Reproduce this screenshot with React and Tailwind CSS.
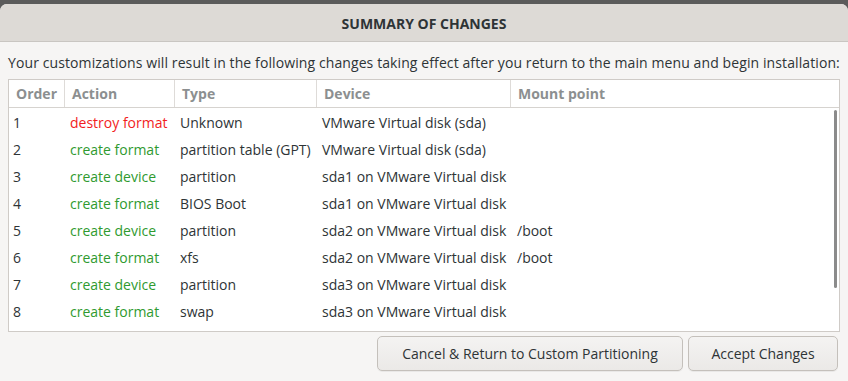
import React from "react";

const rows = [
  ["1", "destroy format", "Unknown", "VMware Virtual disk (sda)", ""],
  ["2", "create format", "partition table (GPT)", "VMware Virtual disk (sda)", ""],
  ["3", "create device", "partition", "sda1 on VMware Virtual disk", ""],
  ["4", "create format", "BIOS Boot", "sda1 on VMware Virtual disk", ""],
  ["5", "create device", "partition", "sda2 on VMware Virtual disk", "/boot"],
  ["6", "create format", "xfs", "sda2 on VMware Virtual disk", "/boot"],
  ["7", "create device", "partition", "sda3 on VMware Virtual disk", ""],
  ["8", "create format", "swap", "sda3 on VMware Virtual disk", ""],
];

// column widths measured off the header separators
const cols = ["w-[56px]", "w-[110px]", "w-[142px]", "w-[194px]", "flex-1"];
const headers = ["Order", "Action", "Type", "Device", "Mount point"];

export default function App() {
  return (
    <div className="w-[848px] h-[381px] bg-[#5b5b5b] pt-[4px] font-['Open_Sans',sans-serif] text-[#2e3436] text-[14px]">
      <div className="h-full flex flex-col rounded-t-[7px] bg-[#f6f5f4] overflow-hidden">
        {/* title bar */}
        <div className="h-[38px] shrink-0 flex items-center justify-center bg-[#dddad6] border-b border-[#c9c6c2]">
          <span className="font-bold text-[14px] pt-[1px] text-[#2e3436]">SUMMARY OF CHANGES</span>
        </div>

        <div className="flex-1 flex flex-col px-[8px]">
          <p className="mt-[11px] h-[20px] leading-[20px] whitespace-nowrap tracking-[0.1px]">
            Your customizations will result in the following changes taking effect after you return to the main menu and begin installation:
          </p>

          {/* changes list */}
          <div className="mt-[6px] w-[832px] h-[253px] bg-white border border-[#cfcbc7] flex flex-col relative">
            <div className="h-[28px] flex border-b border-[#d6d3cf] text-[#8c8f90] font-bold">
              {headers.map((h, i) => (
                <div
                  key={h}
                  className={`${cols[i]} flex items-center pl-[7px] ${i < 4 ? "border-r border-[#dedbd8]" : ""}`}
                >
                  {h}
                </div>
              ))}
            </div>
            {rows.map((r) => (
              <div key={r[0]} className="h-[27px] flex items-center pt-[1px]">
                <div className="w-[56px] pl-[4px]">{r[0]}</div>
                <div className={`w-[110px] pl-[5px] ${r[1].startsWith("destroy") ? "text-[#f21d1d]" : "text-[#2f9a2f]"}`}>
                  {r[1]}
                </div>
                <div className="w-[142px] pl-[5px] whitespace-nowrap">{r[2]}</div>
                <div className="w-[194px] pl-[5px] whitespace-nowrap">{r[3]}</div>
                <div className="flex-1 pl-[6px]">{r[4]}</div>
              </div>
            ))}
            {/* scrollbar thumb */}
            <div className="absolute right-[2px] top-[30px] w-[3px] h-[178px] rounded-full bg-[#8b8b8b]" />
          </div>

          <div className="mt-[4px] flex justify-end gap-[5px] pr-[2px]">
            <button className="w-[306px] h-[35px] rounded-[5px] border border-[#c4c0bb] bg-gradient-to-b from-[#f4f3f2] to-[#ebe9e7] shadow-[0_1px_0_rgba(0,0,0,0.05)]">
              Cancel &amp; Return to Custom Partitioning
            </button>
            <button className="w-[150px] h-[35px] rounded-[5px] border border-[#c4c0bb] bg-gradient-to-b from-[#f4f3f2] to-[#ebe9e7] shadow-[0_1px_0_rgba(0,0,0,0.05)]">
              Accept Changes
            </button>
          </div>
        </div>
      </div>
    </div>
  );
}
